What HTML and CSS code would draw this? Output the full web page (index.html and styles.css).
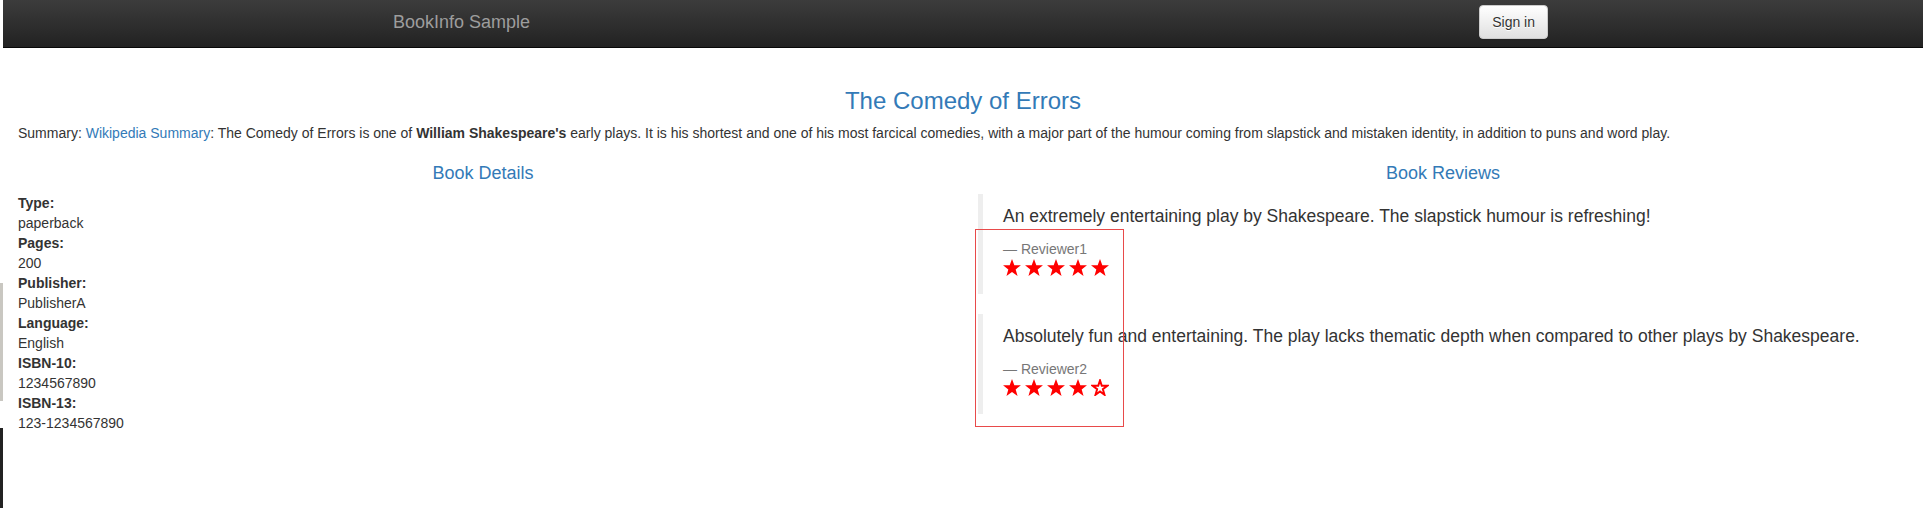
FILE: index.html
```html
<!DOCTYPE html>
<html>
<head>
<meta charset="utf-8">
<title>Simple Bookstore App</title>
<link rel="stylesheet" href="styles.css">
</head>
<body>
<div class="gutter">
  <div class="gutter-space g1"></div>
  <div class="gutter-gray"></div>
  <div class="gutter-space g2"></div>
  <div class="gutter-black"></div>
</div>
<div class="page">
  <nav class="navbar">
    <div class="nav-container">
      <a class="brand" href="#">BookInfo Sample</a>
      <button class="btn-signin" type="button">Sign in</button>
    </div>
  </nav>

  <div class="container-fluid">
    <div class="intro">
      <h3 class="title">The Comedy of Errors</h3>
      <p class="summary">Summary: <a href="#">Wikipedia Summary</a>: The Comedy of Errors is one of <b>William Shakespeare's</b> early plays. It is his shortest and one of his most farcical comedies, with a major part of the humour coming from slapstick and mistaken identity, in addition to puns and word play.</p>
    </div>

    <div class="columns">
      <div class="col">
        <h4 class="col-title">Book Details</h4>
        <dl class="details">
          <dt>Type:</dt><dd>paperback</dd>
          <dt>Pages:</dt><dd>200</dd>
          <dt>Publisher:</dt><dd>PublisherA</dd>
          <dt>Language:</dt><dd>English</dd>
          <dt>ISBN-10:</dt><dd>1234567890</dd>
          <dt>ISBN-13:</dt><dd>123-1234567890</dd>
        </dl>
      </div>
      <div class="col">
        <h4 class="col-title">Book Reviews</h4>
        <blockquote class="review">
          <p>An extremely entertaining play by Shakespeare. The slapstick humour is refreshing!</p>
          <small>—&nbsp;Reviewer1</small>
          <div class="stars">
            <svg class="star" viewBox="0 0 20 19"><polygon points="10,0 12.6,7 20,7 14.1,11.6 16.2,19 10,14.6 3.8,19 5.9,11.6 0,7 7.4,7"/></svg>
            <svg class="star" viewBox="0 0 20 19"><polygon points="10,0 12.6,7 20,7 14.1,11.6 16.2,19 10,14.6 3.8,19 5.9,11.6 0,7 7.4,7"/></svg>
            <svg class="star" viewBox="0 0 20 19"><polygon points="10,0 12.6,7 20,7 14.1,11.6 16.2,19 10,14.6 3.8,19 5.9,11.6 0,7 7.4,7"/></svg>
            <svg class="star" viewBox="0 0 20 19"><polygon points="10,0 12.6,7 20,7 14.1,11.6 16.2,19 10,14.6 3.8,19 5.9,11.6 0,7 7.4,7"/></svg>
            <svg class="star" viewBox="0 0 20 19"><polygon points="10,0 12.6,7 20,7 14.1,11.6 16.2,19 10,14.6 3.8,19 5.9,11.6 0,7 7.4,7"/></svg>
          </div>
        </blockquote>
        <blockquote class="review">
          <p>Absolutely fun and entertaining. The play lacks thematic depth when compared to other plays by Shakespeare.</p>
          <small>—&nbsp;Reviewer2</small>
          <div class="stars">
            <svg class="star" viewBox="0 0 20 19"><polygon points="10,0 12.6,7 20,7 14.1,11.6 16.2,19 10,14.6 3.8,19 5.9,11.6 0,7 7.4,7"/></svg>
            <svg class="star" viewBox="0 0 20 19"><polygon points="10,0 12.6,7 20,7 14.1,11.6 16.2,19 10,14.6 3.8,19 5.9,11.6 0,7 7.4,7"/></svg>
            <svg class="star" viewBox="0 0 20 19"><polygon points="10,0 12.6,7 20,7 14.1,11.6 16.2,19 10,14.6 3.8,19 5.9,11.6 0,7 7.4,7"/></svg>
            <svg class="star" viewBox="0 0 20 19"><polygon points="10,0 12.6,7 20,7 14.1,11.6 16.2,19 10,14.6 3.8,19 5.9,11.6 0,7 7.4,7"/></svg>
            <svg class="star star-empty" viewBox="0 0 20 19"><polygon points="10,1.6 12,7.6 18.3,7.6 13.2,11.4 15,17.6 10,13.9 5,17.6 6.8,11.4 1.7,7.6 8,7.6"/></svg>
          </div>
        </blockquote>
      </div>
    </div>
  </div>
</div>
<div class="highlight"></div>
</body>
</html>
```

FILE: styles.css
```css
* { box-sizing: border-box; }

html, body {
  margin: 0;
  padding: 0;
  background: #fff;
}

body {
  display: flex;
  flex-direction: row;
  font-family: "Liberation Sans", Arial, Helvetica, sans-serif;
  font-size: 14px;
  line-height: 1.42857;
  color: #333;
  min-height: 508px;
  position: relative;
  overflow: hidden;
}

.gutter {
  width: 3px;
  flex: 0 0 3px;
  display: flex;
  flex-direction: column;
}
.gutter-space.g1 { height: 283px; }
.gutter-gray { height: 118px; background: #c9c7c1; }
.gutter-space.g2 { height: 27px; }
.gutter-black { height: 80px; background: #222; }

.page {
  flex: 1 1 auto;
  min-width: 0;
}

.navbar {
  height: 48px;
  background-image: linear-gradient(to bottom, #3c3c3c 0%, #222 100%);
  border-bottom: 1px solid #080808;
  margin-bottom: 20px;
}

.nav-container {
  width: 1170px;
  margin: 0 auto;
  display: flex;
  justify-content: space-between;
  align-items: flex-start;
}

.brand {
  display: block;
  padding-top: 12px;
  line-height: 20px;
  font-size: 18px;
  color: #9d9d9d;
  text-decoration: none;
  margin-left: 15px;
}

.btn-signin {
  margin-top: 5px;
  height: 34px;
  padding: 6px 12px;
  font-family: "Liberation Sans", Arial, Helvetica, sans-serif;
  font-size: 14px;
  line-height: 20px;
  color: #333;
  background-image: linear-gradient(to bottom, #fff 0%, #e0e0e0 100%);
  border: 1px solid #ccc;
  border-radius: 4px;
  text-shadow: 0 1px 0 #fff;
  box-shadow: inset 0 1px 0 rgba(255,255,255,.15), 0 1px 1px rgba(0,0,0,.075);
}

.container-fluid {
  display: flow-root;
  padding: 0 15px;
}

.title {
  margin: 20px 0 10px;
  font-size: 24px;
  font-weight: 500;
  line-height: 1.1;
  color: #337ab7;
  text-align: center;
}

.summary {
  margin: 0 0 10px;
}
.summary a {
  color: #337ab7;
  text-decoration: none;
}

.columns {
  display: grid;
  grid-template-columns: 1fr 1fr;
  column-gap: 30px;
}

.col-title {
  margin: 10px 0 10px;
  font-size: 18px;
  font-weight: 500;
  line-height: 1.1;
  color: #337ab7;
  text-align: center;
}

.details {
  margin: 0;
}
.details dt {
  font-weight: bold;
}
.details dd {
  margin: 0;
}

.review {
  margin: 0 0 20px;
  padding: 10px 20px;
  border-left: 5px solid #eee;
  font-size: 17.5px;
}
.review p {
  margin: 0 0 10px;
  line-height: 25px;
}
.review small {
  display: block;
  font-size: 14px;
  line-height: 20px;
  color: #777;
}

.stars {
  height: 25px;
  display: flex;
  gap: 4px;
  align-items: flex-start;
}
.star {
  width: 18px;
  height: 17px;
  margin-top: 0;
  fill: #ff0000;
}
.star-empty polygon {
  fill: #fff;
  stroke: #ff0000;
  stroke-width: 2.2;
  stroke-linejoin: miter;
}

.highlight {
  position: absolute;
  left: 975px;
  top: 229px;
  width: 149px;
  height: 198px;
  border: 1px solid #e84a4a;
  pointer-events: none;
}
```
